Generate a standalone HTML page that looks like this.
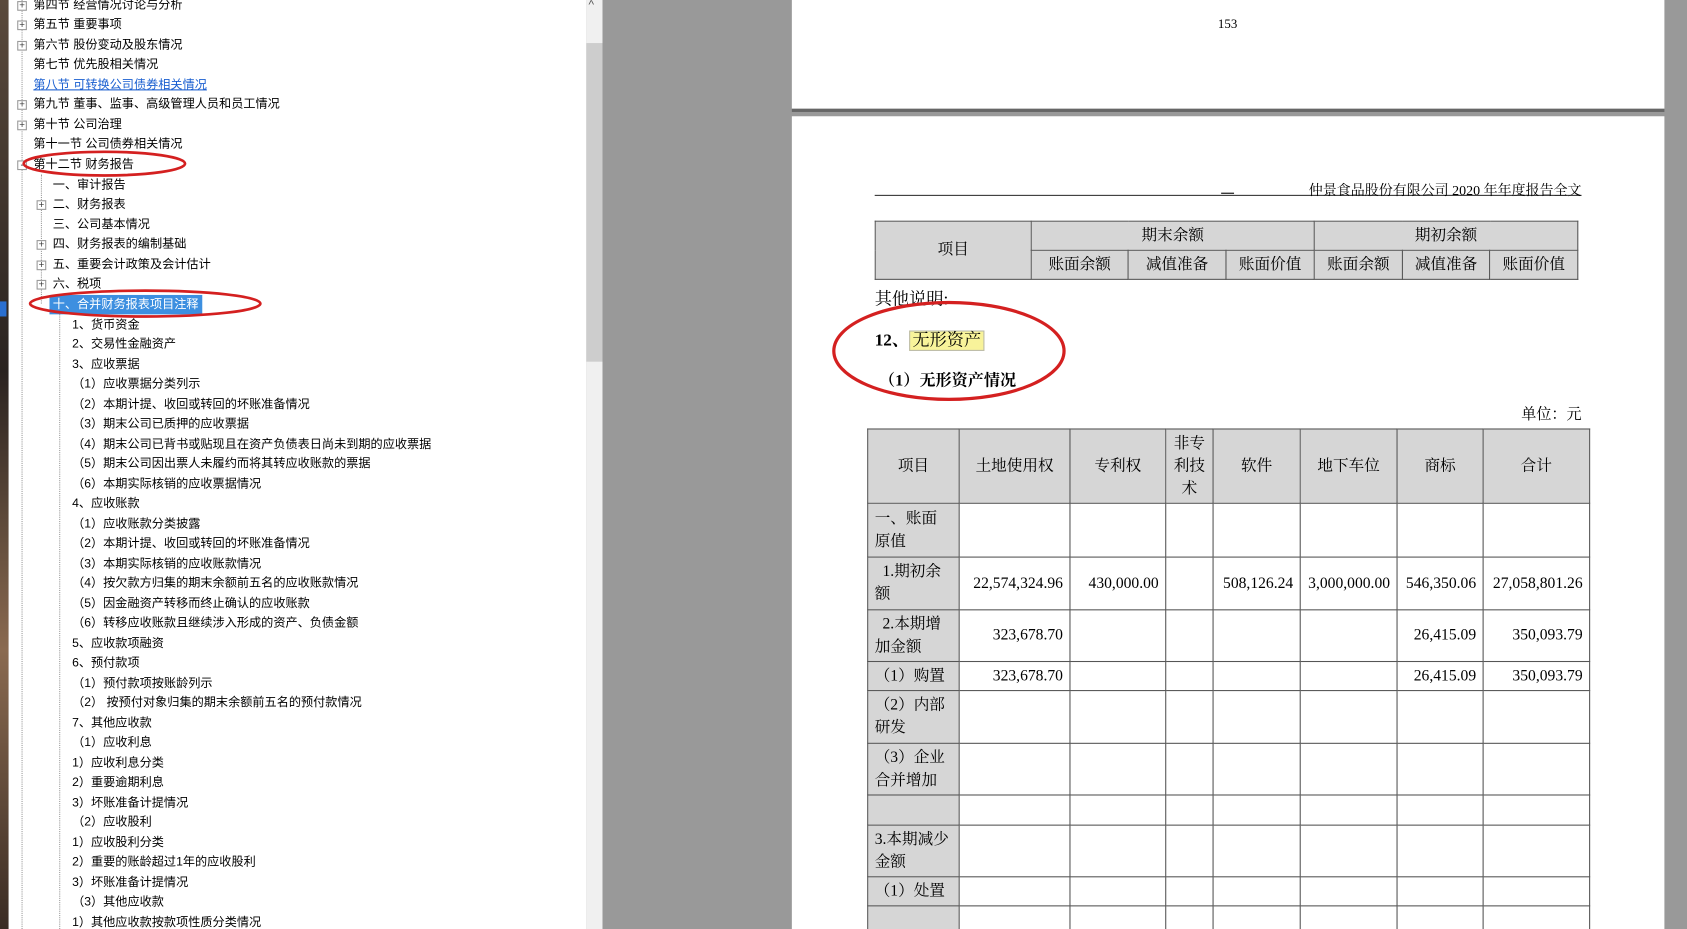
<!DOCTYPE html>
<html><head><meta charset="utf-8"><style>
html,body{margin:0;padding:0;width:1687px;height:929px;overflow:hidden;background:#999}
#w{position:absolute;left:0;top:0;width:1568px;height:863px;transform:scale(1.07589,1.0765);transform-origin:0 0;overflow:hidden;background:#999}
.side{position:absolute;left:8px;top:0;width:537px;height:863px;background:#fff}
.strip{position:absolute;left:0;top:0;width:8px;height:863px;background:linear-gradient(#5a4a3c,#2a2320 40%,#8a6a50 70%,#3a2c24)}
.sb{position:absolute;left:545px;top:0;width:15px;height:863px;background:#f0f0f0}
.thumb{position:absolute;left:545px;top:40px;width:15px;height:296px;background:#cdcdcd}
.t{position:absolute;font:11.3px/18px "Liberation Sans","Noto Sans CJK SC",sans-serif;color:#000;white-space:nowrap}
.pl{position:absolute;width:7px;height:7px;border:1px solid #999;background:#fff;font:9px/7px "Liberation Sans",sans-serif;text-align:center;color:#333}
.vl{position:absolute;border-left:1px dotted #999}
.page{position:absolute;background:#fff;left:736px;width:811px}
.s{font-family:"Liberation Serif","Noto Serif CJK SC",serif;position:absolute;white-space:nowrap}
table{border-collapse:collapse;position:absolute;table-layout:fixed}
td{border:1px solid #555;font:14.5px/21px "Liberation Serif","Noto Serif CJK SC",serif;padding:0 6px;text-align:center;overflow:hidden}
td.g{background:#d6d6d6}
td.r{text-align:right}
td.l{text-align:left}
</style></head><body><div id="w">
<div class="strip"></div>
<div class="side"></div>
<div class="sb"></div><div class="thumb"></div>
<div class="t" style="left:547px;top:-4px;font-size:11px;color:#555">^</div>
<div style="position:absolute;left:0;top:280px;width:6px;height:14px;background:#2a6fd0"></div>

<div class="vl" style="left:20px;top:0;height:863px"></div>
<div class="vl" style="left:38px;top:162px;height:120px"></div>
<div class="vl" style="left:55px;top:290px;height:573px"></div>

<div class="pl" style="left:16px;top:1px">+</div>
<div class="pl" style="left:16px;top:19px">+</div>
<div class="pl" style="left:16px;top:38px">+</div>
<div class="pl" style="left:16px;top:93px">+</div>
<div class="pl" style="left:16px;top:112px">+</div>
<div class="pl" style="left:16px;top:149px">-</div>
<div class="pl" style="left:34px;top:186px">+</div>
<div class="pl" style="left:34px;top:223px">+</div>
<div class="pl" style="left:34px;top:242px">+</div>
<div class="pl" style="left:34px;top:260px">+</div>

<div class="t" style="left:31px;top:-4px">第四节 经营情况讨论与分析</div>
<div class="t" style="left:31px;top:14px">第五节 重要事项</div>
<div class="t" style="left:31px;top:33px">第六节 股份变动及股东情况</div>
<div class="t" style="left:31px;top:51px">第七节 优先股相关情况</div>
<div class="t" style="left:31px;top:70px;color:#1a5fd0;text-decoration:underline">第八节 可转换公司债券相关情况</div>
<div class="t" style="left:31px;top:88px">第九节 董事、监事、高级管理人员和员工情况</div>
<div class="t" style="left:31px;top:107px">第十节 公司治理</div>
<div class="t" style="left:31px;top:125px">第十一节 公司债券相关情况</div>
<div class="t" style="left:31px;top:144px">第十二节 财务报告</div>
<div class="t" style="left:49px;top:163px">一、审计报告</div>
<div class="t" style="left:49px;top:181px">二、财务报表</div>
<div class="t" style="left:49px;top:200px">三、公司基本情况</div>
<div class="t" style="left:49px;top:218px">四、财务报表的编制基础</div>
<div class="t" style="left:49px;top:237px">五、重要会计政策及会计估计</div>
<div class="t" style="left:49px;top:255px">六、税项</div>
<div class="t" style="left:46px;top:274px;background:#3d8fe0;color:#fff;padding:0 3px">十、合并财务报表项目注释</div>

<div class="t" style="left:67px;top:293px">1、货币资金</div>
<div class="t" style="left:67px;top:311px">2、交易性金融资产</div>
<div class="t" style="left:67px;top:330px">3、应收票据</div>
<div class="t" style="left:67px;top:348px">（1）应收票据分类列示</div>
<div class="t" style="left:67px;top:367px">（2）本期计提、收回或转回的坏账准备情况</div>
<div class="t" style="left:67px;top:385px">（3）期末公司已质押的应收票据</div>
<div class="t" style="left:67px;top:404px">（4）期末公司已背书或贴现且在资产负债表日尚未到期的应收票据</div>
<div class="t" style="left:67px;top:422px">（5）期末公司因出票人未履约而将其转应收账款的票据</div>
<div class="t" style="left:67px;top:441px">（6）本期实际核销的应收票据情况</div>
<div class="t" style="left:67px;top:459px">4、应收账款</div>
<div class="t" style="left:67px;top:478px">（1）应收账款分类披露</div>
<div class="t" style="left:67px;top:496px">（2）本期计提、收回或转回的坏账准备情况</div>
<div class="t" style="left:67px;top:515px">（3）本期实际核销的应收账款情况</div>
<div class="t" style="left:67px;top:533px">（4）按欠款方归集的期末余额前五名的应收账款情况</div>
<div class="t" style="left:67px;top:552px">（5）因金融资产转移而终止确认的应收账款</div>
<div class="t" style="left:67px;top:570px">（6）转移应收账款且继续涉入形成的资产、负债金额</div>
<div class="t" style="left:67px;top:589px">5、应收款项融资</div>
<div class="t" style="left:67px;top:607px">6、预付款项</div>
<div class="t" style="left:67px;top:626px">（1）预付款项按账龄列示</div>
<div class="t" style="left:67px;top:644px">（2） 按预付对象归集的期末余额前五名的预付款情况</div>
<div class="t" style="left:67px;top:663px">7、其他应收款</div>
<div class="t" style="left:67px;top:681px">（1）应收利息</div>
<div class="t" style="left:67px;top:700px">1）应收利息分类</div>
<div class="t" style="left:67px;top:718px">2）重要逾期利息</div>
<div class="t" style="left:67px;top:737px">3）坏账准备计提情况</div>
<div class="t" style="left:67px;top:755px">（2）应收股利</div>
<div class="t" style="left:67px;top:774px">1）应收股利分类</div>
<div class="t" style="left:67px;top:792px">2）重要的账龄超过1年的应收股利</div>
<div class="t" style="left:67px;top:811px">3）坏账准备计提情况</div>
<div class="t" style="left:67px;top:829px">（3）其他应收款</div>
<div class="t" style="left:67px;top:848px">1）其他应收款按款项性质分类情况</div>

<svg style="position:absolute;left:0;top:0" width="560" height="300"><ellipse cx="97" cy="152" rx="75" ry="11" fill="none" stroke="#d42020" stroke-width="2.5"/><ellipse cx="135" cy="282" rx="107" ry="12" fill="none" stroke="#d42020" stroke-width="2.5"/></svg>

<div class="page" style="top:0;height:101px"><div class="s" style="left:396px;top:15px;font-size:12px">153</div></div>
<div style="position:absolute;left:736px;top:101px;width:811px;height:3px;background:#666"></div>
<div class="page" style="top:108px;height:755px">
<div style="position:absolute;left:77px;top:73px;width:657px;border-top:1px solid #333"></div>
<div style="position:absolute;left:399px;top:71px;width:12px;border-top:1px solid #000"></div>
<div class="s" style="right:77px;top:58px;font-size:13px">仲景食品股份有限公司 2020 年年度报告全文</div>
<table style="left:77px;top:97px;width:653px">
<colgroup><col style="width:145px"><col style="width:90px"><col style="width:91px"><col style="width:82px"><col style="width:82px"><col style="width:81px"><col style="width:82px"></colgroup>
<tr style="height:27px"><td class="g" rowspan="2">项目</td><td class="g" colspan="3">期末余额</td><td class="g" colspan="3">期初余额</td></tr>
<tr style="height:27px"><td class="g">账面余额</td><td class="g">减值准备</td><td class="g">账面价值</td><td class="g">账面余额</td><td class="g">减值准备</td><td class="g">账面价值</td></tr>
</table>
<div class="s" style="left:77px;top:157px;font-size:16px">其他说明:</div>
<div class="s" style="left:77px;top:195px;font-size:16px;font-weight:bold">12、<span style="background:#f8f39a;border:1px solid #bba;padding:0 2px;font-weight:normal">无形资产</span></div>
<div class="s" style="left:81px;top:234px;font-size:15px;font-weight:bold">（1）无形资产情况</div>
<div class="s" style="right:77px;top:266px;font-size:14px">单位：元</div>
<svg style="position:absolute;left:36px;top:170px" width="220" height="98"><ellipse cx="110" cy="48" rx="107" ry="45" fill="none" stroke="#d42020" stroke-width="3"/></svg>
<table style="left:70px;top:290px;width:671px">
<colgroup><col style="width:85px"><col style="width:103px"><col style="width:89px"><col style="width:44px"><col style="width:81px"><col style="width:90px"><col style="width:80px"><col style="width:99px"></colgroup>
<tr style="height:69px"><td class="g">项目</td><td class="g">土地使用权</td><td class="g">专利权</td><td class="g" style="padding:0 5px">非专利技术</td><td class="g">软件</td><td class="g">地下车位</td><td class="g">商标</td><td class="g">合计</td></tr>
<tr style="height:50px"><td class="g l">一、账面原值</td><td></td><td></td><td></td><td></td><td></td><td></td><td></td></tr>
<tr style="height:49px"><td class="g l">&nbsp;&nbsp;1.期初余额</td><td class="r">22,574,324.96</td><td class="r">430,000.00</td><td></td><td class="r">508,126.24</td><td class="r">3,000,000.00</td><td class="r">546,350.06</td><td class="r">27,058,801.26</td></tr>
<tr style="height:48px"><td class="g l">&nbsp;&nbsp;2.本期增加金额</td><td class="r">323,678.70</td><td></td><td></td><td></td><td></td><td class="r">26,415.09</td><td class="r">350,093.79</td></tr>
<tr style="height:27px"><td class="g l">（1）购置</td><td class="r">323,678.70</td><td></td><td></td><td></td><td></td><td class="r">26,415.09</td><td class="r">350,093.79</td></tr>
<tr style="height:49px"><td class="g l">（2）内部研发</td><td></td><td></td><td></td><td></td><td></td><td></td><td></td></tr>
<tr style="height:48px"><td class="g l">（3）企业合并增加</td><td></td><td></td><td></td><td></td><td></td><td></td><td></td></tr>
<tr style="height:28px"><td class="g"></td><td></td><td></td><td></td><td></td><td></td><td></td><td></td></tr>
<tr style="height:48px"><td class="g l">3.本期减少金额</td><td></td><td></td><td></td><td></td><td></td><td></td><td></td></tr>
<tr style="height:27px"><td class="g l">（1）处置</td><td></td><td></td><td></td><td></td><td></td><td></td><td></td></tr>
<tr style="height:40px"><td class="g"></td><td></td><td></td><td></td><td></td><td></td><td></td><td></td></tr>
</table>
</div>
</div></body></html>
